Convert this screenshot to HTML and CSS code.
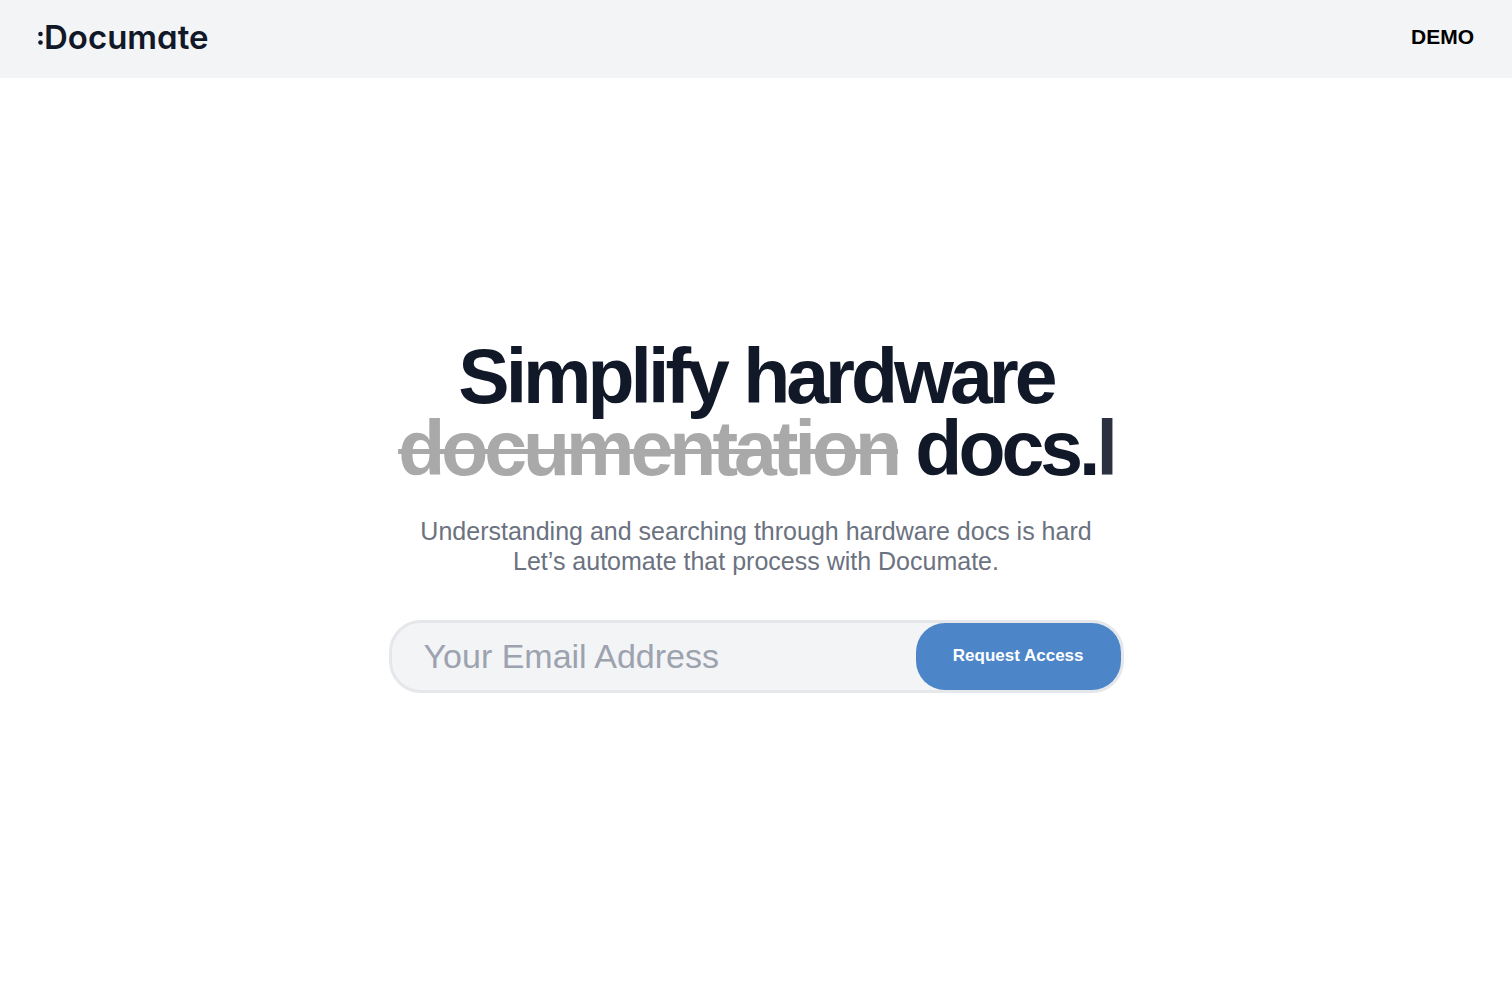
FILE: index.html
```html
<!DOCTYPE html>
<html lang="en">
<head>
<meta charset="utf-8">
<meta name="viewport" content="width=device-width, initial-scale=1">
<title>Documate</title>
<link rel="stylesheet" href="styles.css">
</head>
<body>
<header class="site-header">
  <a class="logo" href="#"><svg class="logo-dots" viewBox="0 0 5 16" aria-hidden="true"><circle cx="2.5" cy="5" r="2.3"/><circle cx="2.5" cy="13.5" r="2.3"/></svg>Documate</a>
  <nav><a class="nav-link" href="#">DEMO</a></nav>
</header>
<main class="hero">
  <h1 class="title">Simplify hardware<br><s class="struck">documentation</s> docs.<span class="cursor">l</span></h1>
  <p class="subtitle">Understanding and searching through hardware docs is hard<br>Let’s automate that process with Documate.</p>
  <form class="signup">
    <input class="signup-input" type="email" placeholder="Your Email Address" aria-label="Your Email Address">
    <button class="signup-button" type="submit">Request Access</button>
  </form>
</main>
</body>
</html>
```
FILE: styles.css
```css
* {
  box-sizing: border-box;
}

body {
  margin: 0;
  min-height: 100vh;
  display: flex;
  flex-direction: column;
  background: #fff;
  font-family: "Liberation Sans", Arial, sans-serif;
}

.site-header {
  display: flex;
  align-items: center;
  justify-content: space-between;
  padding: 17px 38px 21px;
  background: #f3f4f6;
}

.logo {
  display: flex;
  align-items: center;
  gap: 1px;
  color: #111827;
  font-family: Inter, sans-serif;
  font-size: 33px;
  font-weight: 600;
  line-height: 40px;
  font-feature-settings: "cv11";
  text-decoration: none;
}

.logo-dots {
  width: 5px;
  height: 16px;
  fill: currentColor;
}

.nav-link {
  color: #000;
  font-size: 21px;
  font-weight: 700;
  text-decoration: none;
}

.hero {
  flex: 1;
  display: flex;
  flex-direction: column;
  align-items: center;
  justify-content: center;
  padding: 0 16px 28px;
  text-align: center;
}

.title {
  margin: 0 0 32px;
  color: #111827;
  font-size: 77px;
  line-height: 72px;
  letter-spacing: -4px;
}

.struck {
  color: #a9a9a9;
  text-decoration-thickness: 5px;
}

.cursor {
  color: #2b313e;
}

.subtitle {
  margin: 0 0 44px;
  color: #6b7280;
  font-size: 25px;
  line-height: 30px;
}

.signup {
  display: flex;
  width: 100%;
  max-width: 735px;
  border: 3px solid #e5e7eb;
  border-radius: 32px;
  background: #f3f4f6;
}

.signup-input {
  flex: 1;
  min-width: 0;
  padding: 0 32px;
  border: 0;
  border-radius: 29px;
  outline: 0;
  background: transparent;
  color: #111827;
  font: 34px "Liberation Sans", Arial, sans-serif;
}

.signup-input::placeholder {
  color: #9ca3af;
}

.signup-button {
  padding: 23px 37px 24px;
  border: 0;
  border-radius: 29px;
  background: #4c86c9;
  color: #fff;
  font: 700 17px/20px "Liberation Sans", Arial, sans-serif;
}
```
